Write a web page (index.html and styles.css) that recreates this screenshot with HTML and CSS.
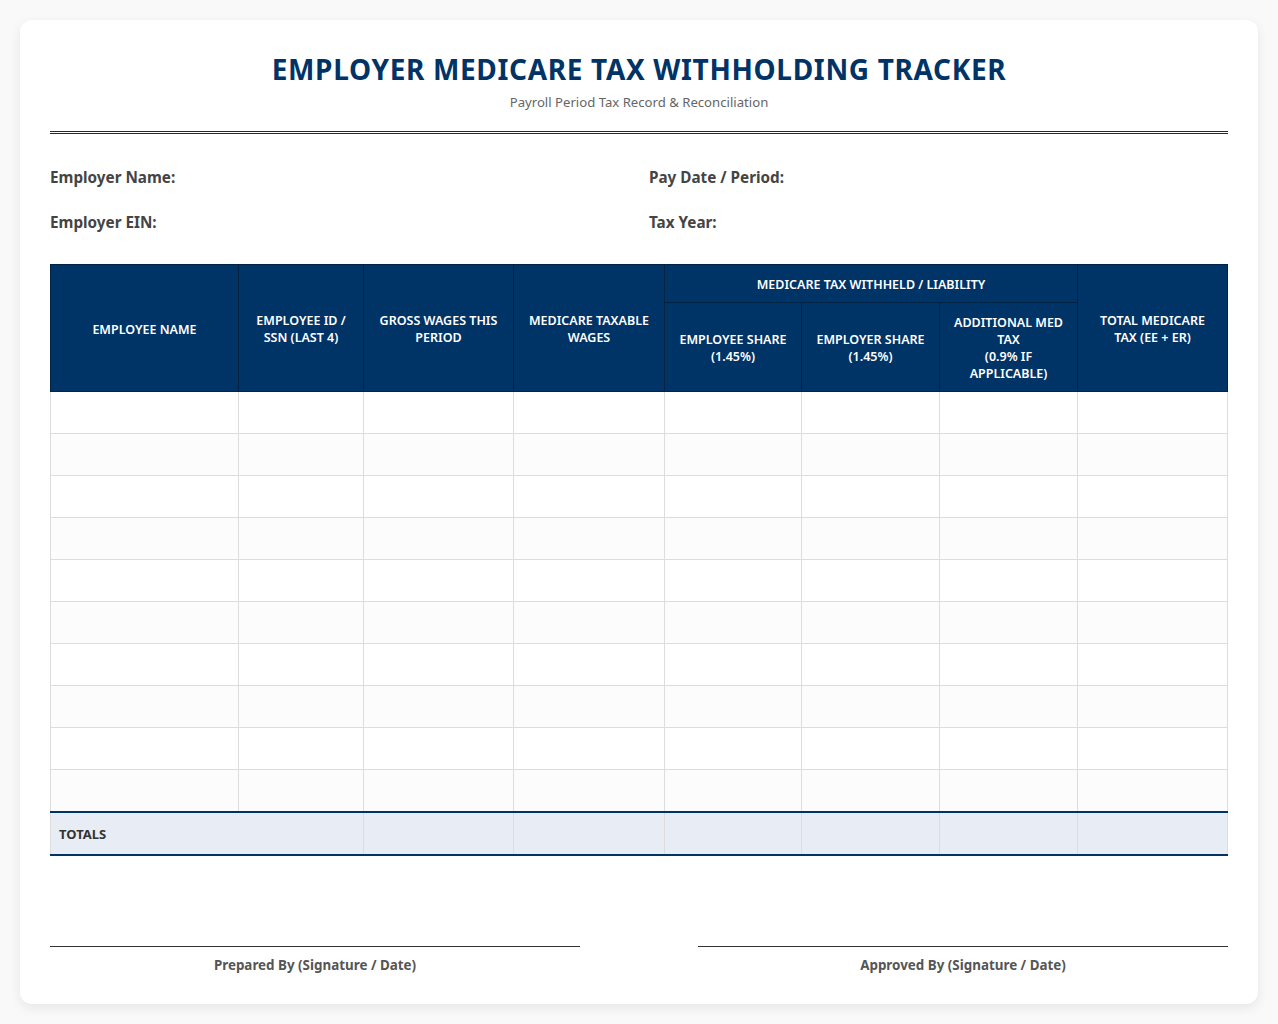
FILE: index.html
```html
<!DOCTYPE html>
<html lang="en">
<head>
<meta charset="utf-8">
<title>Employer Medicare Tax Withholding Tracker</title>
<link rel="stylesheet" href="styles.css">
</head>
<body>
<main class="sheet">
  <header class="head">
    <h1>EMPLOYER MEDICARE TAX WITHHOLDING TRACKER</h1>
    <p>Payroll Period Tax Record &amp; Reconciliation</p>
  </header>
  <section class="info">
    <div>Employer Name:</div>
    <div>Pay Date / Period:</div>
    <div>Employer EIN:</div>
    <div>Tax Year:</div>
  </section>
  <table>
    <colgroup>
      <col class="c1"><col class="c2"><col class="c3"><col class="c4"><col class="c5"><col class="c6"><col class="c7"><col class="c8">
    </colgroup>
    <thead>
      <tr class="r1">
        <th rowspan="2">EMPLOYEE NAME</th>
        <th rowspan="2">EMPLOYEE ID / SSN (LAST 4)</th>
        <th rowspan="2">GROSS WAGES THIS PERIOD</th>
        <th rowspan="2">MEDICARE TAXABLE WAGES</th>
        <th colspan="3">MEDICARE TAX WITHHELD / LIABILITY</th>
        <th rowspan="2">TOTAL MEDICARE TAX (EE + ER)</th>
      </tr>
      <tr>
        <th>EMPLOYEE SHARE<br>(1.45%)</th>
        <th>EMPLOYER SHARE<br>(1.45%)</th>
        <th>ADDITIONAL MED TAX<br>(0.9% IF APPLICABLE)</th>
      </tr>
    </thead>
    <tbody>
      <tr><td></td><td></td><td></td><td></td><td></td><td></td><td></td><td></td></tr>
      <tr><td></td><td></td><td></td><td></td><td></td><td></td><td></td><td></td></tr>
      <tr><td></td><td></td><td></td><td></td><td></td><td></td><td></td><td></td></tr>
      <tr><td></td><td></td><td></td><td></td><td></td><td></td><td></td><td></td></tr>
      <tr><td></td><td></td><td></td><td></td><td></td><td></td><td></td><td></td></tr>
      <tr><td></td><td></td><td></td><td></td><td></td><td></td><td></td><td></td></tr>
      <tr><td></td><td></td><td></td><td></td><td></td><td></td><td></td><td></td></tr>
      <tr><td></td><td></td><td></td><td></td><td></td><td></td><td></td><td></td></tr>
      <tr><td></td><td></td><td></td><td></td><td></td><td></td><td></td><td></td></tr>
      <tr><td></td><td></td><td></td><td></td><td></td><td></td><td></td><td></td></tr>
    </tbody>
    <tfoot>
      <tr><td colspan="2">TOTALS</td><td></td><td></td><td></td><td></td><td></td><td></td></tr>
    </tfoot>
  </table>
  <footer class="signs">
    <div>Prepared By (Signature / Date)</div>
    <div>Approved By (Signature / Date)</div>
  </footer>
</main>
</body>
</html>
```
FILE: styles.css
```css
* { box-sizing: border-box; }
html, body { margin: 0; }
body {
  background: #f9f9f9;
  padding: 20px;
  font-family: "Noto Sans", "Open Sans", sans-serif;
  color: #333;
}
.sheet {
  background: #fff;
  border-radius: 12px;
  box-shadow: 0 4px 12px rgba(0,0,0,.08);
  padding: 30px;
  height: 984px;
}
.head {
  text-align: center;
  border-bottom: 3px double #003366;
  height: 84px;
}
h1 {
  margin: 0;
  font-size: 28px;
  line-height: 38px;
  font-weight: 700;
  letter-spacing: .66px;
  color: #003366;
}
.head p {
  margin: 5px 0 0;
  font-size: 13.15px;
  line-height: 18px;
  color: #666;
}
.info {
  display: grid;
  grid-template-columns: 1fr 1fr;
  column-gap: 20px;
  row-gap: 25px;
  margin-top: 33px;
}
.info div {
  font-size: 15.25px;
  line-height: 20px;
  font-weight: 700;
  color: #444;
}
table {
  width: 100%;
  table-layout: fixed;
  border-collapse: collapse;
  margin-top: 32px;
}
.c1 { width: 188px; }
.c2 { width: 125px; }
.c3 { width: 150px; }
.c4 { width: 151px; }
.c5 { width: 137px; }
.c6 { width: 138px; }
.c7 { width: 138px; }
.c8 { width: 150px; }
th, td { border: 1px solid #ddd; }
th {
  background: #003366;
  border-color: #002244;
  color: #fff;
  font-size: 12.5px;
  line-height: 17px;
  font-weight: 600;
  text-align: center;
  padding: 11px 10px 9px;
}
tbody td { height: 42px; }
tbody tr:nth-child(even) td { background: #fcfcfc; }
tfoot td {
  height: 43px;
  background: #e8edf5;
  border-top: 2px solid #003366;
  border-bottom: 2px solid #003366;
  padding: 1px 8px 0;
  font-size: 13px;
  font-weight: 700;
  color: #333;
}
.signs {
  display: flex;
  justify-content: space-between;
  margin-top: 90px;
}
.signs div {
  width: 530px;
  border-top: 1px solid #333;
  padding-top: 9px;
  text-align: center;
  font-size: 13.4px;
  line-height: 18px;
  font-weight: 700;
  color: #555;
}
```
